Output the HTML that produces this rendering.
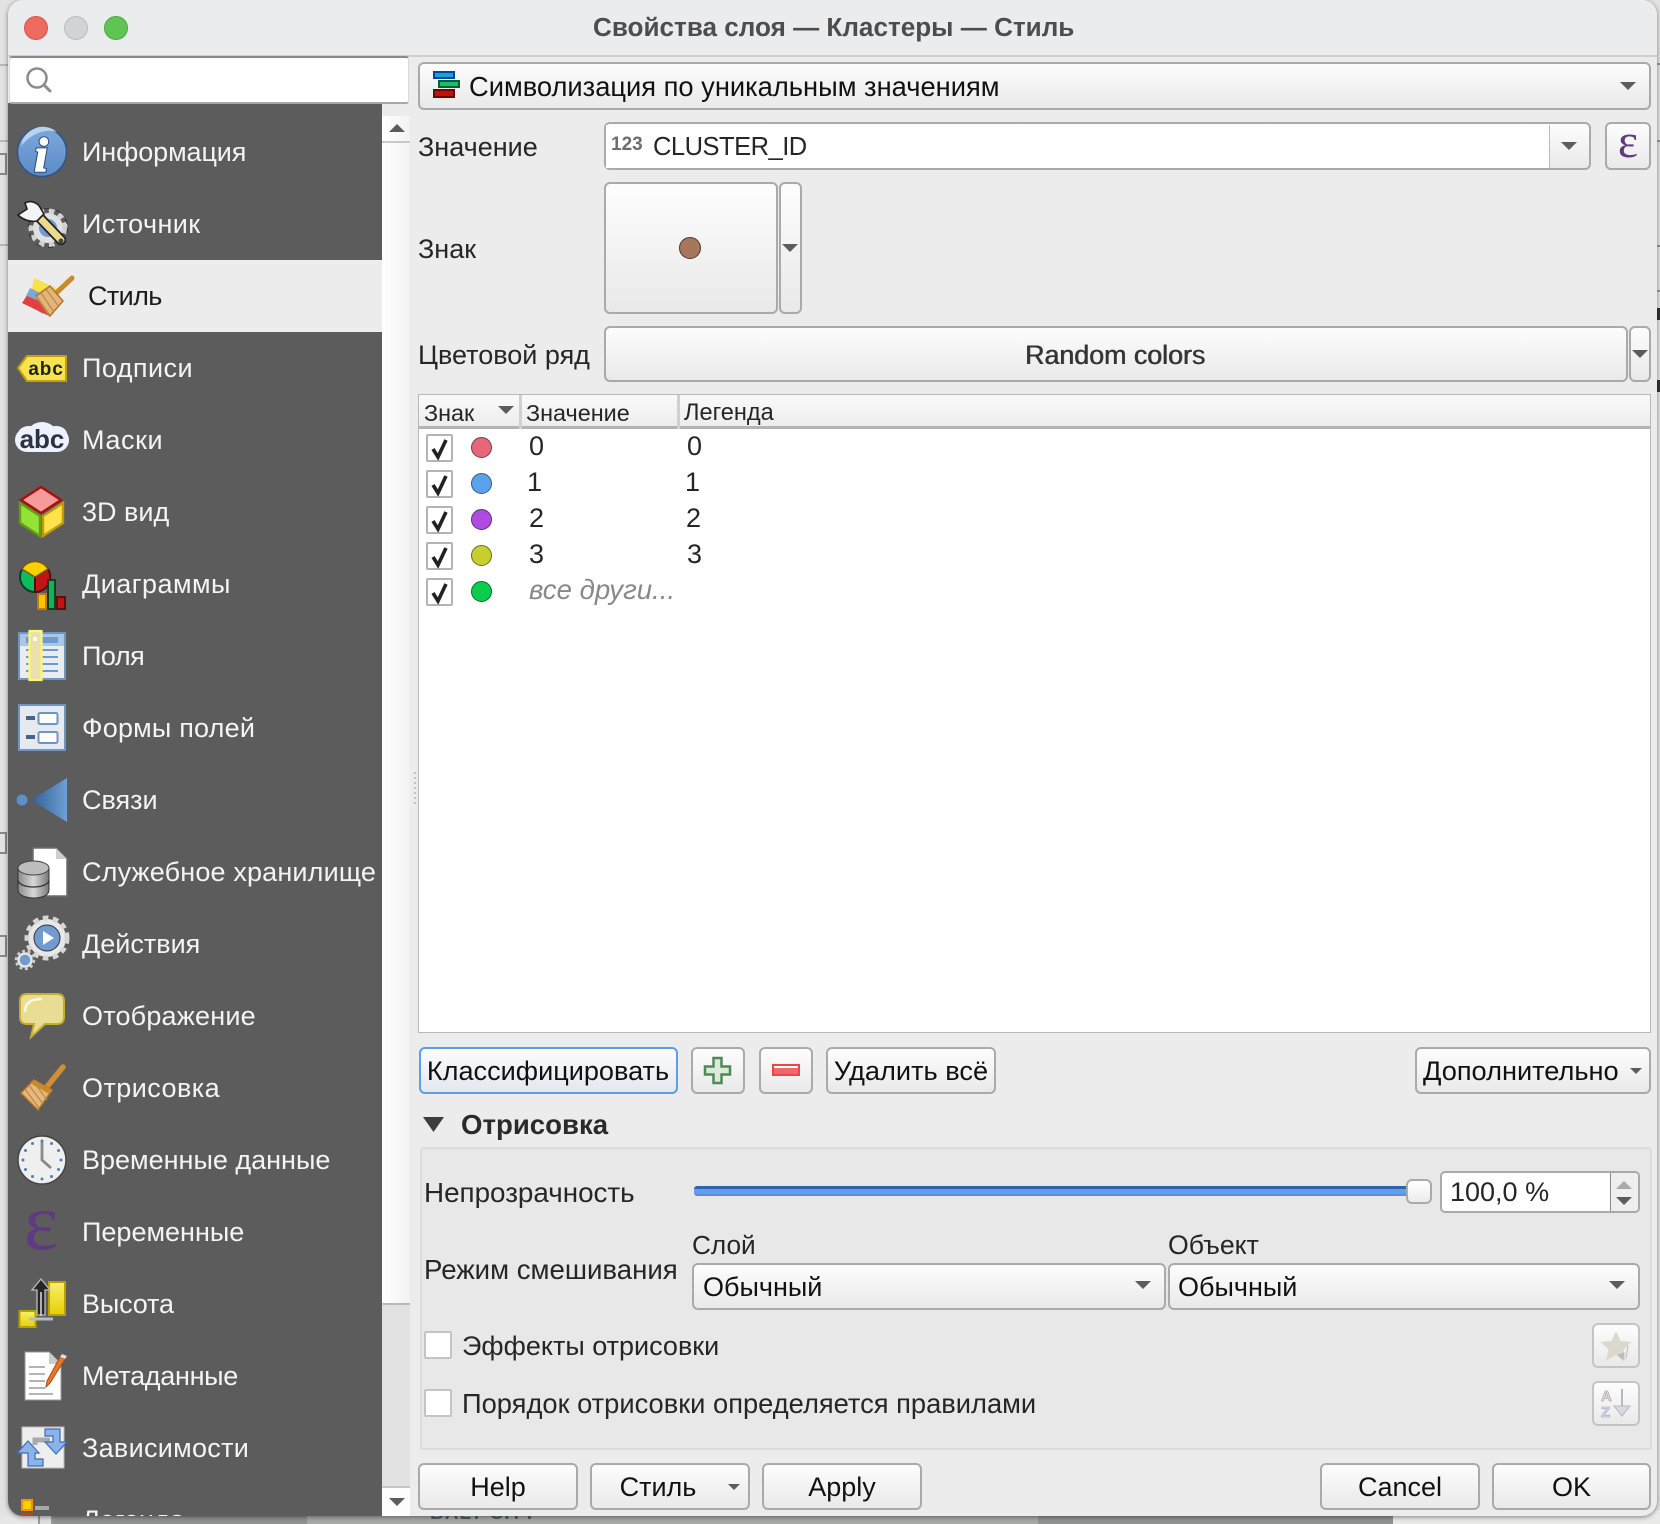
<!DOCTYPE html>
<html lang="ru"><head><meta charset="utf-8"><title>Свойства слоя — Кластеры — Стиль</title>
<style>
*{box-sizing:border-box;margin:0;padding:0}
html,body{width:1660px;height:1524px;overflow:hidden;background:#e2e2e2;font-family:"Liberation Sans",Arial,sans-serif}
.a{position:absolute}
.t{position:absolute;white-space:nowrap;line-height:34px;height:34px;font-size:27px;color:#262626}
.b{position:absolute;border:2px solid #aaa;border-radius:6px;background:linear-gradient(#fdfdfd,#f4f4f4 45%,#e9e9e9)}
.c{text-align:center;color:#111}
.ar{position:absolute;width:0;height:0;border-left:8px solid transparent;border-right:8px solid transparent;border-top:8px solid #5c5c5c}
.s .t{color:#f4f4f4;left:82px}
.cb{position:absolute;width:27px;height:28px;background:#fff;border:2px solid #b4b4b4;border-radius:2px}
</style></head><body>

<!-- background behind the window -->
<div class="a" style="left:0;top:1516px;width:1660px;height:8px;background:#e6e6e6"></div>
<div class="a" style="left:38px;top:1510px;width:15px;height:14px;background:#dcdcdc;border-left:2px solid #999;border-right:2px solid #999"></div>
<div class="a" style="left:53px;top:1510px;width:254px;height:14px;background:#8d918f"></div>
<div class="a" style="left:307px;top:1510px;width:731px;height:14px;background:#a6a8a6"></div>
<div class="a" style="left:1038px;top:1510px;width:355px;height:14px;background:#8f9290"></div>
<div class="a" style="left:1393px;top:1510px;width:267px;height:14px;background:#e9e9e7"></div>
<div class="t" style="left:430px;top:1490px;height:34px;overflow:hidden;font-size:19px;font-weight:bold;letter-spacing:1px;color:#4f5a6a;line-height:48px">BALT CITY</div>
<div class="a" style="left:0;top:64px;width:8px;height:2px;background:#b8b8b8"></div>
<div class="a" style="left:0;top:140px;width:8px;height:2px;background:#b8b8b8"></div>
<div class="a" style="left:0;top:244px;width:8px;height:2px;background:#b8b8b8"></div>
<div class="a" style="left:0;top:153px;width:7px;height:22px;border:2px solid #888;border-left:0"></div>
<div class="a" style="left:0;top:832px;width:7px;height:22px;border:2px solid #888;border-left:0"></div>
<div class="a" style="left:0;top:935px;width:7px;height:22px;border:2px solid #888;border-left:0"></div>
<div class="a" style="left:1657px;top:63px;width:3px;height:2px;background:#999"></div>
<div class="a" style="left:1657px;top:140px;width:3px;height:2px;background:#999"></div>
<div class="a" style="left:1657px;top:245px;width:3px;height:2px;background:#999"></div>
<div class="a" style="left:1657px;top:290px;width:3px;height:2px;background:#999"></div>
<div class="a" style="left:1657px;top:308px;width:3px;height:12px;background:#333"></div>
<div class="a" style="left:1657px;top:380px;width:3px;height:12px;background:#333"></div>

<!-- window -->
<div class="a" style="left:8px;top:0;width:1649px;height:1516px;background:#ececec;border-radius:15px;overflow:hidden;box-shadow:0 1px 5px rgba(0,0,0,.45)" id="w">
  <div class="a" style="left:0;top:0;width:1649px;height:57px;background:#ebecee;border-bottom:2px solid #cfcfcf"></div>
</div>

<!-- traffic lights -->
<div class="a" style="left:24px;top:16px;width:24px;height:24px;border-radius:50%;background:#ee6a5f;border:1px solid #d8544a"></div>
<div class="a" style="left:64px;top:16px;width:24px;height:24px;border-radius:50%;background:#d2d3d5;border:1px solid #bbb"></div>
<div class="a" style="left:104px;top:16px;width:24px;height:24px;border-radius:50%;background:#5fc454;border:1px solid #4aa83f"></div>
<div class="t" style="left:593px;top:10px;font-size:26.1px;font-weight:bold;color:#4d4d4d">Свойства слоя — Кластеры — Стиль</div>

<!-- sidebar -->
<div class="a" style="left:8px;top:103px;width:402px;height:1413px;overflow:hidden;border-bottom-left-radius:15px">
  <div class="a" style="left:0;top:0;width:374px;height:1413px;background:#5c5c5c"></div>
  <div class="a" style="left:0;top:157px;width:374px;height:72px;background:#ececec"></div>
  <div class="a" style="left:374px;top:13px;width:28px;height:1187px;background:linear-gradient(90deg,#fff,#f2f2f2)"></div>
  <div class="a" style="left:374px;top:38px;width:28px;height:2px;background:#c9c9c9"></div>
  <div class="a" style="left:374px;top:1200px;width:28px;height:185px;background:#e2e2e2;border-top:2px solid #b8b8b8;border-bottom:2px solid #c4c4c4;border-left:1px solid #ddd"></div>
  <div class="a" style="left:374px;top:1385px;width:28px;height:28px;background:#fdfdfd"></div>
</div>
<div class="a" style="left:389px;top:124px;width:0;height:0;border-left:8px solid transparent;border-right:8px solid transparent;border-bottom:8px solid #5c5c5c"></div>
<div class="ar" style="left:389px;top:1498px"></div>

<div class="a" style="left:8px;top:103px;width:374px;height:1413px;overflow:hidden;border-bottom-left-radius:15px">
  <div class="a s" style="left:-8px;top:-104px;width:382px;height:1517px">
    <div class="t" style="top:136px;letter-spacing:-.1px">Информация</div>
    <div class="t" style="top:208px;letter-spacing:.4px">Источник</div>
    <div class="t" style="top:280px;left:88px;color:#1c1c1c;letter-spacing:-.6px">Стиль</div>
    <div class="t" style="top:352px;letter-spacing:.45px">Подписи</div>
    <div class="t" style="top:424px;letter-spacing:.6px">Маски</div>
    <div class="t" style="top:496px">3D вид</div>
    <div class="t" style="top:568px;letter-spacing:.45px">Диаграммы</div>
    <div class="t" style="top:640px;letter-spacing:-.5px">Поля</div>
    <div class="t" style="top:712px;letter-spacing:.2px">Формы полей</div>
    <div class="t" style="top:784px">Связи</div>
    <div class="t" style="top:856px;letter-spacing:.16px">Служебное хранилище</div>
    <div class="t" style="top:928px">Действия</div>
    <div class="t" style="top:1000px;letter-spacing:.2px">Отображение</div>
    <div class="t" style="top:1072px;letter-spacing:.45px">Отрисовка</div>
    <div class="t" style="top:1144px">Временные данные</div>
    <div class="t" style="top:1216px">Переменные</div>
    <div class="t" style="top:1288px;letter-spacing:-.15px">Высота</div>
    <div class="t" style="top:1360px;letter-spacing:-.3px">Метаданные</div>
    <div class="t" style="top:1432px;letter-spacing:.3px">Зависимости</div>
    <div class="t" style="top:1504px;height:13px;overflow:hidden">Легенда</div>
  </div>
</div>

<!-- search -->
<div class="a" style="left:9px;top:56px;width:400px;height:48px;background:#fff;border:1px solid #d8d8d8;border-top:2px solid #8a8a8a;border-bottom:2px solid #a8a8a8;border-radius:3px"></div>

<!-- sidebar + misc icons -->
<svg class="a" style="left:0;top:0" width="1660" height="1524" viewBox="0 0 1660 1524" font-family="Liberation Sans">
<defs>
<linearGradient id="g1" x1="0" y1="0" x2="0" y2="1"><stop offset="0" stop-color="#7ea9dc"/><stop offset="1" stop-color="#5a8ac6"/></linearGradient>
<linearGradient id="g2" x1="0" y1="0" x2="1" y2="0"><stop offset="0" stop-color="#2f5f96"/><stop offset="1" stop-color="#6f9ed2"/></linearGradient>
<linearGradient id="g3" x1="0" y1="0" x2="1" y2="0"><stop offset="0" stop-color="#8a8a8a"/><stop offset=".5" stop-color="#d8d8d8"/><stop offset="1" stop-color="#777"/></linearGradient>
<linearGradient id="g4" x1="0" y1="0" x2="0" y2="1"><stop offset="0" stop-color="#f8ee70"/><stop offset="1" stop-color="#e8d000"/></linearGradient>
</defs>
<!-- search glass -->
<circle cx="37" cy="78" r="9.5" fill="none" stroke="#8c8c8c" stroke-width="2.5"/><path d="M44 85l6 6" stroke="#8c8c8c" stroke-width="3" stroke-linecap="round"/>
<!-- info -->
<circle cx="42" cy="152" r="24.5" fill="url(#g1)" stroke="#2e5488" stroke-width="1.5"/>
<path d="M21 146a22 22 0 0 1 36-14c-12-4-26 2-36 14z" fill="#b9d3ef"/>
<text x="41" y="171" font-family="Liberation Serif" font-size="48" font-weight="bold" font-style="italic" fill="#274a78" stroke="#274a78" stroke-width="3.4" text-anchor="middle">i</text>
<text x="41" y="171" font-family="Liberation Serif" font-size="48" font-weight="bold" font-style="italic" fill="#fff" stroke="#fff" stroke-width="1.4" text-anchor="middle">i</text>
<!-- source: gear+wrench -->
<circle cx="48" cy="228" r="12" fill="#6f9bd0" stroke="#e0e0e0" stroke-width="6"/>
<circle cx="48" cy="228" r="17" fill="none" stroke="#d2d2d2" stroke-width="5" stroke-dasharray="5.5 4.6"/>
<circle cx="48" cy="228" r="19.5" fill="none" stroke="#333" stroke-width="1" stroke-dasharray="5.5 7"/>
<path d="M38 216l23 24" stroke="#222" stroke-width="10.5" stroke-linecap="round"/>
<path d="M38 216l23 24" stroke="#ecd98a" stroke-width="7" stroke-linecap="round"/>
<path d="M18 215L27 209 25 203C30 200 38 202 41 209L44 214 37 221C33 222 24 221 18 215z" fill="#f4f4f4" stroke="#1e1e1e" stroke-width="1.6"/>
<circle cx="61" cy="241" r="2.5" fill="#444"/>
<!-- style -->
<path d="M34 278l24 11-18 16-10-6z" fill="#f5e34a"/><path d="M30 288l-7 14 20 12 8-16z" fill="#7da7d6"/><path d="M27 296l-5 7 27 13 6-8z" fill="#e53e3e"/>
<path d="M52 297l20-19" stroke="#c98a2c" stroke-width="5" stroke-linecap="round"/>
<path d="M36 296l14-10 13 15-13 15z" fill="#e4b478" stroke="#b3762a" stroke-width="1.5"/>
<path d="M36 296l13 20M41 293l13 19M46 289l13 18" stroke="#b98a4a" stroke-width="1.2"/>
<!-- labels -->
<path d="M18 368l9-12h39v25H27z" fill="#f7e34d" stroke="#c39f13" stroke-width="2"/>
<text x="46" y="375" font-size="19" font-weight="bold" letter-spacing=".8" fill="#222" text-anchor="middle">abc</text>
<!-- masks -->
<g fill="#eef2ff"><rect x="15" y="428" width="54" height="24" rx="12"/><ellipse cx="42" cy="433" rx="14" ry="11"/><ellipse cx="29" cy="434" rx="11" ry="8"/><ellipse cx="56" cy="434" rx="11" ry="8"/></g>
<text x="42" y="448" font-size="26" font-weight="bold" fill="#2b3340" text-anchor="middle">abc</text>
<!-- 3D -->
<path d="M41 487l20 13-20 13-20-13z" fill="#f79a9a" stroke="#a80f0f" stroke-width="2.4"/>
<path d="M20 503l20 13v20l-20-13z" fill="#93e336" stroke="#689a12" stroke-width="2.4"/>
<path d="M43 516l20-13v20l-20 13z" fill="#fde24a" stroke="#c09a08" stroke-width="2.4"/>
<!-- diagrams -->
<circle cx="35" cy="577" r="15" fill="#0dbc5c" stroke="#0a3f2a" stroke-width="2"/>
<path d="M35 577l13-8a15 15 0 0 1-13 23z" fill="#c31414" stroke="#4e1010" stroke-width="2"/>
<path d="M35 577l-13-8a15 15 0 0 1 26 0z" fill="#fdd000" stroke="#7a5a10" stroke-width="1.5"/>
<rect x="38" y="594" width="8" height="15" fill="#ffc400" stroke="#c07a10" stroke-width="2"/>
<rect x="48" y="580" width="7" height="29" fill="#12b35a" stroke="#0a3f2a" stroke-width="2"/>
<rect x="57" y="597" width="8" height="12" fill="#c31414" stroke="#5a1010" stroke-width="2"/>
<!-- fields -->
<rect x="19" y="633" width="46" height="46" fill="#e9edf2" stroke="#6e95c4" stroke-width="2"/>
<rect x="20" y="634" width="44" height="12" fill="#a9c6e6"/><rect x="26" y="637" width="32" height="6" fill="#6f9bcb"/>
<path d="M26 650h32M26 657h32M26 664h32M26 671h32" stroke="#6f9bcb" stroke-width="2"/>
<rect x="29.500" y="631" width="12" height="49" fill="#ecdfae" stroke="#fafa6a" stroke-width="2.200"/>
<rect x="33" y="637" width="4" height="4" fill="#fff"/>
<!-- forms -->
<rect x="19" y="705" width="46" height="45" fill="#e6e9ee" stroke="#6e95c4" stroke-width="2"/>
<rect x="26" y="716" width="9" height="4" fill="#44648c"/><rect x="26" y="735" width="9" height="4" fill="#44648c"/>
<rect x="38.500" y="713" width="19" height="11" rx="1.500" fill="#fff" stroke="#6e95c4" stroke-width="2"/>
<rect x="38.500" y="732" width="19" height="11" rx="1.500" fill="#fff" stroke="#6e95c4" stroke-width="2"/>
<!-- relations -->
<path d="M31 800l36-22v44z" fill="url(#g2)"/><circle cx="22" cy="800" r="5.500" fill="#5e8fca"/>
<!-- storage -->
<path d="M33 848h23l11 11v37H33z" fill="#fff" stroke="#6d6d6d" stroke-width="1.500"/><path d="M56 848v11h11z" fill="#cfcfcf"/>
<path d="M18 868v22c0 5 7 8 16 8s15-3 15-8v-22z" fill="url(#g3)" stroke="#333" stroke-width="1"/>
<ellipse cx="33.500" cy="868" rx="15.500" ry="7" fill="#bdbdbd" stroke="#444" stroke-width="1"/>
<path d="M18 880c0 4 7 7 15.500 7s15.500-3 15.500-7" fill="none" stroke="#333" stroke-width="1.300"/>
<!-- actions -->
<circle cx="47" cy="938" r="16" fill="#6f9bd0" stroke="#e8e8e8" stroke-width="6"/>
<circle cx="47" cy="938" r="20" fill="none" stroke="#d6d6d6" stroke-width="5" stroke-dasharray="5.500 4.500"/>
<circle cx="47" cy="938" r="13" fill="none" stroke="#333" stroke-width="1"/>
<path d="M43 931l11 7-11 7z" fill="#fff"/>
<circle cx="25" cy="960" r="6.500" fill="#6f9bd0" stroke="#e4e4e4" stroke-width="2.500"/>
<circle cx="25" cy="960" r="9" fill="none" stroke="#ccc" stroke-width="2.500" stroke-dasharray="3 2.600"/>
<!-- display bubble -->
<path d="M27 994h30q7 0 7 7v16q0 7-7 7H45l-14 13 3-13h-7q-7 0-7-7v-16q0-7 7-7z" fill="#e8dd92" stroke="#c4ad30" stroke-width="2"/>
<path d="M25 1012c0-8 4-13 17-13" fill="none" stroke="#fbf8dc" stroke-width="2.500"/>
<!-- rendering brush -->
<path d="M46 1088l17-21" stroke="#d08f34" stroke-width="5.500" stroke-linecap="round"/>
<path d="M21 1093l13-13 18 10-14 20z" fill="#e6b87c" stroke="#b3762a" stroke-width="1.500"/>
<path d="M34 1080l18 10-3 4-19-11z" fill="#c98a2c"/>
<path d="M25 1089l14 19M29 1085l14 19M33 1081l14 19" stroke="#b98a4a" stroke-width="1.200"/>
<!-- clock -->
<circle cx="42" cy="1160" r="24" fill="#efefef" stroke="#444" stroke-width="1.500"/>
<path d="M42 1142v18l9 8" fill="none" stroke="#8a8a8a" stroke-width="2.800"/>
<g fill="#4f7fb8"><circle cx="42" cy="1141" r="1.500"/><circle cx="42" cy="1179" r="1.500"/><circle cx="23" cy="1160" r="1.500"/><circle cx="61" cy="1160" r="1.500"/><circle cx="51.500" cy="1143.500" r="1.500"/><circle cx="32.500" cy="1143.500" r="1.500"/><circle cx="51.500" cy="1176.500" r="1.500"/><circle cx="32.500" cy="1176.500" r="1.500"/><circle cx="25.500" cy="1150.500" r="1.500"/><circle cx="58.500" cy="1150.500" r="1.500"/><circle cx="25.500" cy="1169.500" r="1.500"/><circle cx="58.500" cy="1169.500" r="1.500"/></g>
<!-- variables -->
<text x="41" y="1249" font-family="Liberation Serif" font-size="82" fill="#5f3a80" text-anchor="middle">ε</text>
<!-- elevation -->
<rect x="49" y="1282" width="16" height="33" fill="url(#g4)" stroke="#b8a000" stroke-width="2"/>
<rect x="19.500" y="1311" width="16" height="16" fill="url(#g4)" stroke="#b8a000" stroke-width="2"/>
<path d="M29 1319h24" stroke="#bbb" stroke-width="3"/>
<path d="M41 1279l9 11h-5v25h-8v-25h-5z" fill="#262626" stroke="#bbb" stroke-width="1.300"/>
<path d="M41 1292v24" stroke="#ddd" stroke-width="1.500"/>
<!-- metadata -->
<path d="M25 1352h24l12 12v36H25z" fill="#fff" stroke="#999" stroke-width="1"/><path d="M49 1352v12h12z" fill="#ccc"/>
<path d="M29 1367h16M29 1374h16M29 1381h16M29 1388h16M29 1394h24" stroke="#aaa" stroke-width="1.800"/>
<path d="M65 1359l-15 24-4 4 1-6 13-24z" fill="#e8762c" stroke="#b04c10" stroke-width="1"/>
<path d="M60 1357l5 2 2-3-5-2z" fill="#ddd"/>
<!-- dependencies -->
<rect x="22" y="1427" width="42" height="41" fill="#eee" stroke="#bbb"/>
<path d="M35 1445v-5h15" fill="none" stroke="#aaa" stroke-width="5"/>
<path d="M45 1429h15v13h7l-11 12-11-12h8v-6h-8z" fill="#8ab4ea" stroke="#3c6cb4" stroke-width="1.200"/>
<path d="M43 1466H28v-13h-11l11-12 11 12h-4v6h8z" fill="#8ab4ea" stroke="#3c6cb4" stroke-width="1.200"/>
<!-- legend -->
<rect x="22" y="1500" width="10" height="10" fill="#ffd000" stroke="#f29000" stroke-width="2"/>
<rect x="35" y="1506" width="14" height="4" fill="#a8a8a8"/>
<rect x="21" y="1513" width="12" height="2.500" fill="#c8401a"/>
<!-- splitter dots -->
<g fill="#c2c2c2"><rect x="414" y="772" width="2" height="2"/><rect x="414" y="777" width="2" height="2"/><rect x="414" y="782" width="2" height="2"/><rect x="414" y="787" width="2" height="2"/><rect x="414" y="792" width="2" height="2"/><rect x="414" y="797" width="2" height="2"/><rect x="414" y="802" width="2" height="2"/></g>
</svg>

<!-- renderer combo -->
<div class="b" style="left:418px;top:62px;width:1233px;height:48px"></div>
<svg class="a" style="left:432px;top:70px" width="30" height="32"><rect x="2" y="2" width="20" height="6" fill="#15a5c8" stroke="#0a3fb0" stroke-width="2"/><rect x="7" y="11" width="20" height="6" fill="#14c06a" stroke="#0f5a30" stroke-width="2"/><rect x="2" y="20" width="20" height="7" fill="#c01010" stroke="#6a0808" stroke-width="2"/></svg>
<div class="t" style="left:469px;top:70px;color:#111;font-size:27.3px">Символизация по уникальным значениям</div>
<div class="ar" style="left:1620px;top:82px"></div>

<!-- value -->
<div class="t" style="left:418px;top:130px">Значение</div>
<div class="b" style="left:604px;top:122px;width:987px;height:48px"></div>
<div class="a" style="left:606px;top:125px;width:944px;height:43px;background:#fff;border-right:1px solid #bbb"></div>
<div class="t" style="left:611px;top:128px;font-size:19px;color:#6d6d6d;font-weight:bold">123</div>
<div class="t" style="left:653px;top:130px;font-size:25.5px;letter-spacing:-.5px">CLUSTER_ID</div>
<div class="ar" style="left:1561px;top:142px"></div>
<div class="b" style="left:1605px;top:122px;width:46px;height:48px"></div>
<svg class="a" style="left:1605px;top:122px" width="46" height="48"><text x="23" y="35" font-family="Liberation Serif" font-size="48" fill="#5f3a80" text-anchor="middle">ε</text></svg>

<!-- symbol -->
<div class="t" style="left:418px;top:232px">Знак</div>
<div class="b" style="left:604px;top:182px;width:174px;height:132px"></div>
<div class="b" style="left:779px;top:182px;width:23px;height:132px"></div>
<div class="a" style="left:679px;top:237px;width:22px;height:22px;border-radius:50%;background:#a7775b;border:1px solid #4a3a30"></div>
<div class="ar" style="left:782px;top:244px"></div>

<!-- color ramp -->
<div class="t" style="left:418px;top:338px">Цветовой ряд</div>
<div class="b" style="left:604px;top:326px;width:1024px;height:56px"></div>
<div class="b" style="left:1629px;top:326px;width:22px;height:56px"></div>
<div class="t c" style="left:604px;top:338px;width:1022px;font-size:26.8px;color:#333;text-shadow:.7px 0 0 #555">Random colors</div>
<div class="ar" style="left:1632px;top:350px"></div>

<!-- table -->
<div class="a" style="left:418px;top:394px;width:1233px;height:639px;background:#fff;border:1px solid #b8b8b8"></div>
<div class="a" style="left:419px;top:395px;width:1231px;height:34px;background:linear-gradient(#fafafa,#ededed);border-bottom:3px solid #b4b4b4"></div>
<div class="a" style="left:519px;top:395px;width:3px;height:34px;background:#d0d0d0"></div>
<div class="a" style="left:677px;top:395px;width:3px;height:34px;background:#d0d0d0"></div>
<div class="t" style="left:424px;top:396px;font-size:23.4px">Знак</div>
<div class="t" style="left:526px;top:396px;font-size:23.4px">Значение</div>
<div class="t" style="left:684px;top:396px;font-size:23.6px">Легенда</div>
<div class="ar" style="left:498px;top:406px"></div>

<div class="cb" style="left:426px;top:434px"></div><div class="cb" style="left:426px;top:470px"></div><div class="cb" style="left:426px;top:506px"></div><div class="cb" style="left:426px;top:542px"></div><div class="cb" style="left:426px;top:578px"></div>
<svg class="a" style="left:426px;top:434px" width="28" height="172" fill="none" stroke="#222" stroke-width="3.6"><path d="M7 15l5 8 8-17"/><path d="M7 51l5 8 8-17"/><path d="M7 87l5 8 8-17"/><path d="M7 123l5 8 8-17"/><path d="M7 159l5 8 8-17"/></svg>
<div class="a" style="left:471px;top:437px;width:21px;height:21px;border-radius:50%;background:#e8667a;border:1px solid #66444a"></div>
<div class="a" style="left:471px;top:473px;width:21px;height:21px;border-radius:50%;background:#5aa2ec;border:1px solid #3a5a80"></div>
<div class="a" style="left:471px;top:509px;width:21px;height:21px;border-radius:50%;background:#b04be0;border:1px solid #5a3070"></div>
<div class="a" style="left:471px;top:545px;width:21px;height:21px;border-radius:50%;background:#c6cf2d;border:1px solid #6a6e20"></div>
<div class="a" style="left:471px;top:581px;width:21px;height:21px;border-radius:50%;background:#0ccc4c;border:1px solid #0f6a30"></div>
<div class="t" style="left:529px;top:429px">0</div><div class="t" style="left:687px;top:429px">0</div>
<div class="t" style="left:527px;top:465px">1</div><div class="t" style="left:685px;top:465px">1</div>
<div class="t" style="left:529px;top:501px">2</div><div class="t" style="left:686px;top:501px">2</div>
<div class="t" style="left:529px;top:537px">3</div><div class="t" style="left:687px;top:537px">3</div>
<div class="t" style="left:529px;top:573px;font-style:italic;color:#888;font-size:27.6px">все други...</div>

<!-- action row -->
<div class="b" style="left:419px;top:1047px;width:259px;height:47px;border-color:#5a9fe8;background:linear-gradient(#fbfcfe,#e3e8ef)"></div>
<div class="t c" style="left:419px;top:1054px;width:258px;font-size:27.1px">Классифицировать</div>
<div class="b" style="left:691px;top:1047px;width:54px;height:47px"></div>
<svg class="a" style="left:703px;top:1056px" width="30" height="30"><path d="M10.500 2h8v8.500h8.500v8h-8.500v8.500h-8v-8.500H2v-8h8.500z" fill="#dfe9d8" stroke="#4e8a58" stroke-width="2.500"/></svg>
<div class="b" style="left:759px;top:1047px;width:54px;height:47px"></div>
<div class="a" style="left:772px;top:1064px;width:28px;height:12px;background:#f0666a;border:2px solid #ee4444;box-shadow:inset 0 2px 0 #fff"></div>
<div class="b" style="left:826px;top:1047px;width:170px;height:47px"></div>
<div class="t c" style="left:826px;top:1054px;width:170px;font-size:27.2px">Удалить всё</div>
<div class="b" style="left:1415px;top:1047px;width:236px;height:47px"></div>
<div class="t" style="left:1423px;top:1054px;font-size:27.2px;color:#111">Дополнительно</div>
<div class="ar" style="left:1630px;top:1068px;border-left-width:6px;border-right-width:6px;border-top-width:6px"></div>

<!-- group -->
<svg class="a" style="left:422px;top:1116px" width="24" height="17"><path d="M1 1h21L11.500 16z" fill="#3d3d3d"/></svg>
<div class="t" style="left:461px;top:1108px;font-weight:bold;color:#2a2a2a;font-size:27.6px">Отрисовка</div>
<div class="a" style="left:420px;top:1147px;width:1232px;height:303px;background:#e8e8e8;border:2px solid #dcdcdc;border-radius:3px"></div>
<div class="t" style="left:424px;top:1176px;font-size:27.8px">Непрозрачность</div>
<div class="a" style="left:694px;top:1186px;width:714px;height:10px;background:#5ea0ee;border-top:3px solid #2c64ac;border-bottom:2px solid #5b90d8;border-radius:3px 0 0 3px"></div>
<div class="b" style="left:1406px;top:1179px;width:26px;height:25px;background:linear-gradient(#fff,#ececec)"></div>
<div class="a" style="left:1440px;top:1171px;width:200px;height:42px;background:#fff;border:2px solid #aaa;border-radius:5px"></div>
<div class="a" style="left:1610px;top:1173px;width:28px;height:38px;background:#efefef;border-left:1px solid #888;border-radius:0 4px 4px 0"></div>
<div class="a" style="left:1616px;top:1181px;width:0;height:0;border-left:8px solid transparent;border-right:8px solid transparent;border-bottom:8px solid #aaa"></div>
<div class="ar" style="left:1616px;top:1197px"></div>
<div class="t" style="left:1450px;top:1175px">100,0 %</div>

<div class="t" style="left:692px;top:1228px;font-size:26.2px">Слой</div>
<div class="t" style="left:1168px;top:1228px;font-size:26.7px">Объект</div>
<div class="t" style="left:424px;top:1253px;font-size:27.6px">Режим смешивания</div>
<div class="b" style="left:692px;top:1263px;width:474px;height:47px"></div>
<div class="b" style="left:1168px;top:1263px;width:472px;height:47px"></div>
<div class="t" style="left:703px;top:1270px;color:#111">Обычный</div>
<div class="t" style="left:1178px;top:1270px;color:#111">Обычный</div>
<div class="ar" style="left:1135px;top:1281px"></div>
<div class="ar" style="left:1609px;top:1281px"></div>

<div class="cb" style="left:424px;top:1331px;width:28px;border-color:#c4c4c4"></div>
<div class="t" style="left:462px;top:1329px">Эффекты отрисовки</div>
<div class="cb" style="left:424px;top:1389px;width:28px;border-color:#c4c4c4"></div>
<div class="t" style="left:462px;top:1387px;font-size:27.3px">Порядок отрисовки определяется правилами</div>

<div class="b" style="left:1592px;top:1323px;width:48px;height:45px;border-color:#c4c4c4"></div>
<svg class="a" style="left:1598px;top:1328px" width="36" height="36"><path d="M18 3l4.500 10 11 1-8 7.500 2.500 11-10-5.500-10 5.500 2.500-11-8-7.500 11-1z" fill="#dcd8cc"/><path d="M20 27l6-2-1 7zM30 18l-2 12" stroke="#bbb" fill="#bbb"/></svg>
<div class="b" style="left:1592px;top:1381px;width:48px;height:45px;border-color:#c4c4c4"></div>
<svg class="a" style="left:1598px;top:1384px" width="36" height="38" font-family="Liberation Sans"><text x="3" y="17" font-size="15" font-weight="bold" fill="#e2dcdc" stroke="#b9acb4" stroke-width=".8">A</text><text x="3" y="33" font-size="15" font-weight="bold" fill="#dfe2ea" stroke="#aab2c8" stroke-width=".8">Z</text><path d="M24 5v21" stroke="#b5bac2" stroke-width="2"/><path d="M16 22h16l-8 10z" fill="#d6dbe2" stroke="#b5bac2"/></svg>

<!-- bottom buttons -->
<div class="b" style="left:418px;top:1463px;width:160px;height:47px"></div>
<div class="t c" style="left:418px;top:1470px;width:160px">Help</div>
<div class="b" style="left:590px;top:1463px;width:160px;height:47px"></div>
<div class="t c" style="left:590px;top:1470px;width:136px">Стиль</div>
<div class="ar" style="left:728px;top:1484px;border-left-width:6px;border-right-width:6px;border-top-width:6px"></div>
<div class="b" style="left:762px;top:1463px;width:160px;height:47px"></div>
<div class="t c" style="left:762px;top:1470px;width:160px">Apply</div>
<div class="b" style="left:1320px;top:1463px;width:160px;height:47px"></div>
<div class="t c" style="left:1320px;top:1470px;width:160px">Cancel</div>
<div class="b" style="left:1492px;top:1463px;width:159px;height:47px"></div>
<div class="t c" style="left:1492px;top:1470px;width:159px">OK</div>

</body></html>
